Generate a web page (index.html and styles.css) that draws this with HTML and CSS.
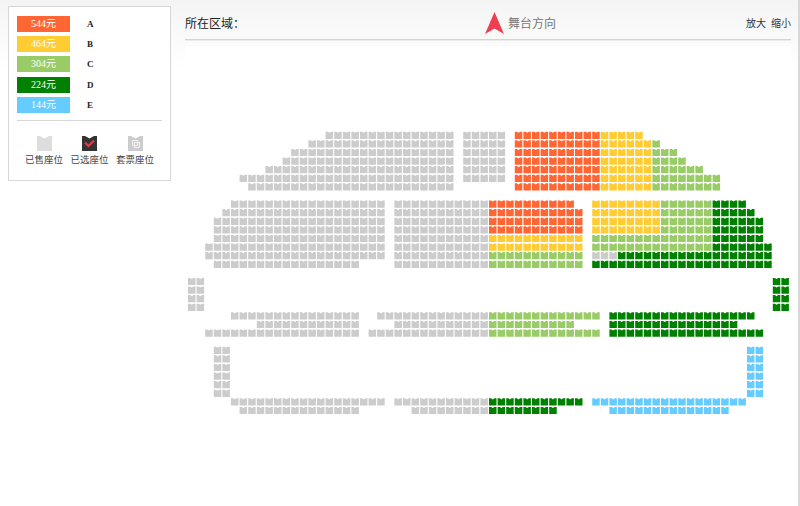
FILE: index.html
```html
<!DOCTYPE html>
<html lang="zh">
<head>
<meta charset="utf-8">
<title>选座</title>
<link rel="stylesheet" href="styles.css">
</head>
<body>
<div class="page">
  <aside class="panel">
    <ul class="prices">
      <li class="price"><span class="swatch swatch-a">544元</span><b class="grade">A</b></li>
      <li class="price"><span class="swatch swatch-b">464元</span><b class="grade">B</b></li>
      <li class="price"><span class="swatch swatch-c">304元</span><b class="grade">C</b></li>
      <li class="price"><span class="swatch swatch-d">224元</span><b class="grade">D</b></li>
      <li class="price"><span class="swatch swatch-e">144元</span><b class="grade">E</b></li>
    </ul>
    <div class="states">
      <div class="state">
        <svg class="state-icon" viewBox="0 0 15 15"><path fill="#dddddd" d="M0 0H3L7.5 2.5L12 0H15V15H0Z"/></svg>
        <span>已售座位</span>
      </div>
      <div class="state">
        <svg class="state-icon" viewBox="0 0 15 15"><path fill="#333333" d="M0 0H3L7.5 2.5L12 0H15V15H0Z"/><path fill="none" stroke="#e8374a" stroke-width="2.2" d="M3 6.5L6.5 10L12 4.5"/></svg>
        <span>已选座位</span>
      </div>
      <div class="state">
        <svg class="state-icon" viewBox="0 0 15 15"><path fill="#cccccc" d="M0 0H3L7.5 2.5L12 0H15V15H0Z"/><path fill="none" stroke="#f2f2f2" stroke-width="1" d="M4.5 4.5H9.5V9.5H4.5ZM6.5 6.5H11.5V11.5H6.5Z"/></svg>
        <span>套票座位</span>
      </div>
    </div>
  </aside>
  <main class="stage">
    <header class="bar">
      <div class="area">所在区域：</div>
      <div class="direction">
        <svg class="arrow" viewBox="0 0 19 22"><path fill="#ef3e50" d="M9.5 0L19 22L9.5 16.5L0 22Z"/></svg>
        <span>舞台方向</span>
      </div>
      <div class="zoom"><span>放大</span><span>缩小</span></div>
    </header>
    <div class="map" id="map"></div>
  </main>
</div>
<script src="seats.js"></script>
</body>
</html>
```
FILE: styles.css
```css
* { box-sizing: border-box; }
html, body { margin: 0; height: 100%; }
body {
  overflow: hidden;
  background: linear-gradient(#f4f4f4, #ffffff 70px);
  font-family: "Liberation Serif", "Noto Sans CJK SC", serif;
}
.page {
  display: flex;
  align-items: flex-start;
  height: 100%;
  padding: 6px 0 0 8px;
  border-right: 2px solid #d8d8d8;
}
.panel {
  flex: none;
  width: 163px;
  height: 175px;
  padding: 9px 8px 0;
  background: #fff;
  border: 1px solid #d6d6d6;
}
.prices {
  margin: 0;
  padding: 0 0 7px;
  list-style: none;
  display: flex;
  flex-direction: column;
  gap: 4.2px;
  border-bottom: 1px solid #d6d6d6;
}
.price { display: flex; align-items: center; height: 16px; }
.swatch {
  width: 53px;
  height: 16px;
  color: #fff;
  font-size: 10px;
  line-height: 16px;
  text-align: center;
}
.swatch-a { background: #ff6633; }
.swatch-b { background: #ffcc33; }
.swatch-c { background: #99cc66; }
.swatch-d { background: #008000; }
.swatch-e { background: #66ccff; }
.grade { margin-left: 17px; font-size: 9px; color: #222; }
.states {
  display: grid;
  grid-template-columns: repeat(3, 45.5px);
  justify-content: center;
  padding-top: 15px;
}
.state {
  display: flex;
  flex-direction: column;
  align-items: center;
  gap: 3px;
  font-size: 9.5px;
  line-height: 13px;
  color: #444;
  white-space: nowrap;
}
.state-icon { width: 15px; height: 15px; display: block; }
.stage {
  flex: none;
  width: 606px;
  margin-left: 14px;
  margin-top: -6px;
}
.bar {
  display: flex;
  align-items: center;
  height: 40px;
  padding-top: 6px;
  border-bottom: 1px solid #d4d4d4;
  box-shadow: 0 1px 0 #ececec;
}
.area { flex: none; width: 300px; font-size: 12px; color: #222; }
.direction {
  display: flex;
  align-items: center;
  gap: 4px;
  font-size: 12px;
  color: #777;
}
.arrow { width: 19px; height: 22px; display: block; }
.zoom {
  margin-left: auto;
  display: flex;
  gap: 5px;
  font-size: 10px;
  color: #333;
}
.map { margin-top: 6px; height: 460px; background: #fff; }
.seat-map { display: block; width: 606px; height: 460px; }
```
FILE: seats.js
```js
var COLORS = { g: "#cccccc", a: "#ff6633", b: "#ffcc33", c: "#99cc66", d: "#008000", e: "#66ccff" };
var PITCH = 8.6, LEFT = 3, TOP = 85.7;

// row: [[first column, last column, colour], ...]
var ROWS = {
  0: [[16,30,"g"],[32,36,"g"],[38,47,"a"],[48,52,"b"]],
  1: [[14,30,"g"],[32,36,"g"],[38,47,"a"],[48,53,"b"],[54,54,"c"]],
  2: [[12,30,"g"],[32,36,"g"],[38,47,"a"],[48,53,"b"],[54,56,"c"]],
  3: [[11,30,"g"],[32,36,"g"],[38,47,"a"],[48,53,"b"],[54,57,"c"]],
  4: [[9,30,"g"],[32,36,"g"],[38,47,"a"],[48,53,"b"],[54,59,"c"]],
  5: [[6,30,"g"],[32,36,"g"],[38,47,"a"],[48,53,"b"],[54,61,"c"]],
  6: [[7,30,"g"],[38,47,"a"],[48,53,"b"],[54,61,"c"]],
  8: [[5,22,"g"],[24,34,"g"],[35,44,"a"],[47,54,"b"],[55,60,"c"],[61,64,"d"]],
  9: [[4,22,"g"],[24,34,"g"],[35,45,"a"],[47,54,"b"],[55,60,"c"],[61,65,"d"]],
  10: [[3,22,"g"],[24,34,"g"],[35,45,"a"],[47,54,"b"],[55,60,"c"],[61,66,"d"]],
  11: [[3,22,"g"],[24,34,"g"],[35,45,"a"],[47,54,"b"],[55,60,"c"],[61,66,"d"]],
  12: [[3,22,"g"],[24,34,"g"],[35,45,"b"],[47,60,"c"],[61,66,"d"]],
  13: [[2,22,"g"],[24,34,"g"],[35,45,"b"],[47,60,"c"],[61,67,"d"]],
  14: [[2,22,"g"],[24,34,"g"],[35,45,"c"],[47,49,"g"],[50,67,"d"]],
  15: [[3,19,"g"],[24,34,"g"],[35,45,"c"],[47,67,"d"]],
  17: [[0,1,"g"],[68,69,"d"]],
  18: [[0,1,"g"],[68,69,"d"]],
  19: [[0,1,"g"],[68,69,"d"]],
  20: [[0,1,"g"],[68,69,"d"]],
  21: [[5,19,"g"],[22,34,"g"],[35,47,"c"],[49,65,"d"]],
  22: [[8,19,"g"],[24,34,"g"],[35,44,"c"],[49,63,"d"]],
  23: [[2,19,"g"],[21,34,"g"],[35,47,"c"],[49,66,"d"]],
  25: [[3,4,"g"],[65,66,"e"]],
  26: [[3,4,"g"],[65,66,"e"]],
  27: [[3,4,"g"],[65,66,"e"]],
  28: [[3,4,"g"],[65,66,"e"]],
  29: [[3,4,"g"],[65,66,"e"]],
  30: [[3,4,"g"],[65,66,"e"]],
  31: [[5,22,"g"],[24,34,"g"],[35,45,"d"],[47,64,"e"]],
  32: [[6,19,"g"],[26,34,"g"],[35,42,"d"],[49,62,"e"]]
};

var SEAT = "M0 0H2.2L3.75 1.1L5.3 0H7.5V7.2H0Z";
var out = '<svg class="seat-map" viewBox="0 0 606 460" xmlns="http://www.w3.org/2000/svg">';
Object.keys(ROWS).forEach(function (r) {
  ROWS[r].forEach(function (seg) {
    for (var c = seg[0]; c <= seg[1]; c++) {
      var x = (LEFT + c * PITCH).toFixed(2), y = (TOP + r * PITCH).toFixed(2);
      out += '<path fill="' + COLORS[seg[2]] + '" transform="translate(' + x + " " + y + ')" d="' + SEAT + '"/>';
    }
  });
});
document.getElementById("map").innerHTML = out + "</svg>";
```
